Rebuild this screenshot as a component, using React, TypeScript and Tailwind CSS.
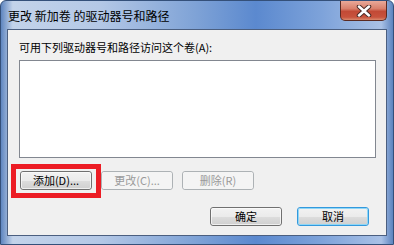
import React from 'react';

const cjk = "font-['SimSun','Noto_Sans_CJK_SC','Liberation_Sans',sans-serif]";

// Win7 style push button
function Btn({ label, disabled = false, focused = false }: { label: string; disabled?: boolean; focused?: boolean }) {
  let cls = 'border-[#707070] text-black bg-[linear-gradient(180deg,#f2f2f2_0%,#ebebeb_50%,#dddddd_51%,#cfcfcf_100%)]';
  if (disabled) cls = 'border-[#adb2b5] text-[#9a9a9a] bg-[#f4f4f4]';
  if (focused) cls = 'border-[#3399dd] text-black bg-[linear-gradient(180deg,#f2f2f2_0%,#ebebeb_50%,#dddddd_51%,#cfcfcf_100%)]';
  return (
    <div className={`w-[72px] h-[19px] rounded-[3px] border flex items-center justify-center text-[11px] leading-none ${cls}`}>
      <div className={`w-full h-full rounded-[2px] border flex items-center justify-center ${disabled ? 'border-[#f4f4f4]' : focused ? 'border-[#8fd6f6]' : 'border-[#fcfcfc]/70'}`}>
        {label}
      </div>
    </div>
  );
}

function CloseButton() {
  return (
    <div className="w-[47px] h-[20px] rounded-b-[5px] border border-t-0 border-[#5a2a22] bg-[linear-gradient(180deg,#e9a999_0%,#d9806c_40%,#c24a36_55%,#c8533d_85%,#d98a6e_100%)] flex items-center justify-center">
      <svg width="16" height="12" viewBox="0 0 16 12">
        <path d="M3 1.5 L13 10.5 M13 1.5 L3 10.5" stroke="#4a2a26" strokeWidth="4.5" strokeLinecap="round" />
        <path d="M3 1.5 L13 10.5 M13 1.5 L3 10.5" stroke="#ffffff" strokeWidth="2.5" strokeLinecap="round" />
      </svg>
    </div>
  );
}

export default function App() {
  return (
    <div className={`w-[394px] h-[245px] relative overflow-hidden ${cjk}`}>
      {/* Window frame */}
      <div className="w-full h-full rounded-t-[6px] border border-[#34507a] bg-[linear-gradient(90deg,#5f86c0_0%,#c3d3ea_3%,#b4c8e6_25%,#7ea2d6_50%,#5b89cf_65%,#7ea3da_82%,#a9c1e6_97%,#5d84bf_100%)] flex flex-col">
        {/* Title bar */}
        <div className="h-[28px] flex items-start justify-between">
          <span className="pl-[7px] pt-[9px] text-[12px] leading-[12px] text-black">更改 新加卷 的驱动器号和路径</span>
          <div className="mr-[6px]">
            <CloseButton />
          </div>
        </div>

        {/* Client area */}
        <div className="mx-[6px] h-[207px] border border-[#4b5f80] bg-[#f0f0f0] flex flex-col">
          <div className="px-[11px] pt-[11px] flex flex-col">
            <div className="h-[12px] text-[11px] leading-[12px] text-black">可用下列驱动器号和路径访问这个卷(A):</div>
            <div className="mt-[7px] w-[357px] h-[98px] border border-[#828790] bg-white" />
            <div className="mt-[13px] ml-[1px] flex gap-[9px]">
              <Btn label="添加(D)..." />
              <Btn label="更改(C)..." disabled />
              <Btn label="删除(R)" disabled />
            </div>
            <div className="mt-[17px] pr-[6px] flex justify-end gap-[15px]">
              <Btn label="确定" />
              <Btn label="取消" focused />
            </div>
          </div>
        </div>
      </div>

      {/* Red highlight annotation */}
      <div className="absolute left-[11px] top-[164px] w-[90px] h-[34px] border-[5px] border-[#ec1c24]" />
    </div>
  );
}
